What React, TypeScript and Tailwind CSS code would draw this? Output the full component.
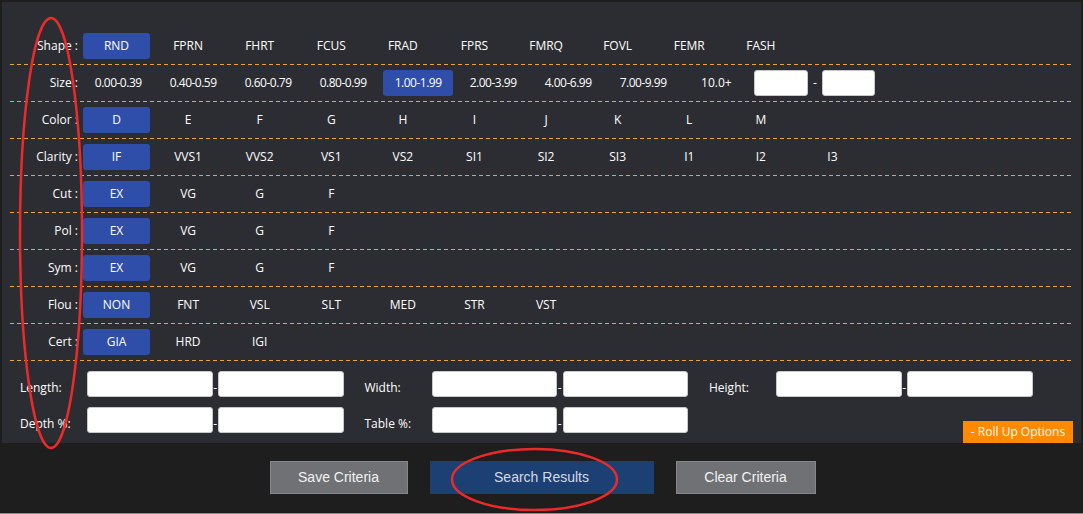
import React from 'react';

const rows: { label: string; items: string[] }[] = [
  { label: 'Shape :', items: ['RND', 'FPRN', 'FHRT', 'FCUS', 'FRAD', 'FPRS', 'FMRQ', 'FOVL', 'FEMR', 'FASH'] },
  { label: 'Color :', items: ['D', 'E', 'F', 'G', 'H', 'I', 'J', 'K', 'L', 'M'] },
  { label: 'Clarity :', items: ['IF', 'VVS1', 'VVS2', 'VS1', 'VS2', 'SI1', 'SI2', 'SI3', 'I1', 'I2', 'I3'] },
  { label: 'Cut :', items: ['EX', 'VG', 'G', 'F'] },
  { label: 'Pol :', items: ['EX', 'VG', 'G', 'F'] },
  { label: 'Sym :', items: ['EX', 'VG', 'G', 'F'] },
  { label: 'Flou :', items: ['NON', 'FNT', 'VSL', 'SLT', 'MED', 'STR', 'VST'] },
  { label: 'Cert :', items: ['GIA', 'HRD', 'IGI'] },
];

const sizes = ['0.00-0.39', '0.40-0.59', '0.60-0.79', '0.80-0.99', '1.00-1.99', '2.00-3.99', '4.00-6.99', '7.00-9.99'];

function Row({ label, children }: { label: string; children: React.ReactNode }) {
  return (
    <div className="relative flex h-[37px] items-center pb-px">
      <div className="w-[68px] shrink-0 text-right whitespace-nowrap">{label}</div>
      <div className="ml-[5px] flex items-center gap-[4.6px]">{children}</div>
      <div className="absolute bottom-0 left-0 right-0 h-px bg-[repeating-linear-gradient(90deg,#eda33c_0_4px,transparent_4px_7px)]" />
    </div>
  );
}

function Cell({ text, active, wide }: { text: string; active?: boolean; wide?: boolean }) {
  return (
    <div
      className={`flex h-[26px] items-center justify-center rounded-[3px] ${wide ? 'w-[70.4px] tracking-[-0.5px]' : 'w-[67px]'} ${
        active ? 'bg-[#2f4ea9]' : ''
      }`}
    >
      {text}
    </div>
  );
}

function Input({ w }: { w: string }) {
  return <div className={`h-[26px] ${w} shrink-0 rounded-[3px] border border-[#c8c8c8] bg-white`} />;
}

function Range({ label }: { label: string }) {
  return (
    <div className="flex w-[324px] shrink-0 items-end">
      <div className="mb-px w-[67px] shrink-0 leading-[16px] whitespace-nowrap">{label}</div>
      <Input w="w-[125.5px]" />
      <div className="mb-px w-[5.6px] text-center leading-[16px]">-</div>
      <Input w="w-[125.5px]" />
    </div>
  );
}

export default function App() {
  return (
    <div className="relative h-[514px] w-[1083px] overflow-hidden bg-[#1e1e1e] pt-[2px] pl-[2px]">
      <div
        className="flex h-[441px] w-[1079px] flex-col bg-[#2c2d32] px-[8px] pt-[26px] text-[12px] text-white"
        style={{ fontFamily: '"Open Sans", "Noto Sans", sans-serif' }}
      >
        <Row label={rows[0].label}>
          {rows[0].items.map((t, i) => (
            <Cell key={t} text={t} active={i === 0} />
          ))}
        </Row>
        <Row label="Size :">
          {sizes.map((t) => (
            <Cell key={t} text={t} wide active={t === '1.00-1.99'} />
          ))}
          <Cell text="10.0+" />
          <div className="flex items-center">
            <Input w="w-[53.4px]" />
            <div className="w-[14px] text-center">-</div>
            <Input w="w-[53.4px]" />
          </div>
        </Row>
        {rows.slice(1).map((r) => (
          <Row key={r.label} label={r.label}>
            {r.items.map((t, i) => (
              <Cell key={t + i} text={t} active={i === 0} />
            ))}
          </Row>
        ))}

        {/* dimension filters */}
        <div className="flex flex-col gap-[10px] py-[10px] pl-[10px]">
          <div className="flex gap-[20.5px]">
            <Range label="Length:" />
            <Range label="Width:" />
            <Range label="Height:" />
          </div>
          <div className="flex gap-[20.5px]">
            <Range label="Depth %:" />
            <Range label="Table %:" />
            <div className="-mb-[10px] ml-auto flex h-[22px] w-[110px] shrink-0 items-center justify-center self-end bg-[#ff8a00] whitespace-nowrap">
              - Roll Up Options
            </div>
          </div>
        </div>
      </div>

      <div
        className="flex justify-center gap-[22px] pt-[18px] text-[14px]"
        style={{ fontFamily: '"Liberation Sans", Arial, sans-serif' }}
      >
        <button className="h-[33px] w-[138px] border border-[#85878a] bg-[#6f7174] text-[#f2f2f2]">Save Criteria</button>
        <button className="h-[33px] w-[224px] bg-[#1c3f74] text-[#d5dbe4]">Search Results</button>
        <button className="h-[33px] w-[140px] border border-[#85878a] bg-[#6f7174] text-[#f2f2f2]">Clear Criteria</button>
      </div>
      <div className="absolute bottom-0 left-0 h-px w-full bg-[#8a8a8a]" />

      {/* red annotation marks */}
      <svg className="pointer-events-none absolute inset-0" width="1083" height="514">
        <ellipse cx="51" cy="233" rx="31" ry="215" fill="none" stroke="#ec2a2a" strokeWidth="2.5" />
        <ellipse cx="534.5" cy="479.5" rx="82.5" ry="30.5" fill="none" stroke="#ec2a2a" strokeWidth="2.5" />
      </svg>
    </div>
  );
}
